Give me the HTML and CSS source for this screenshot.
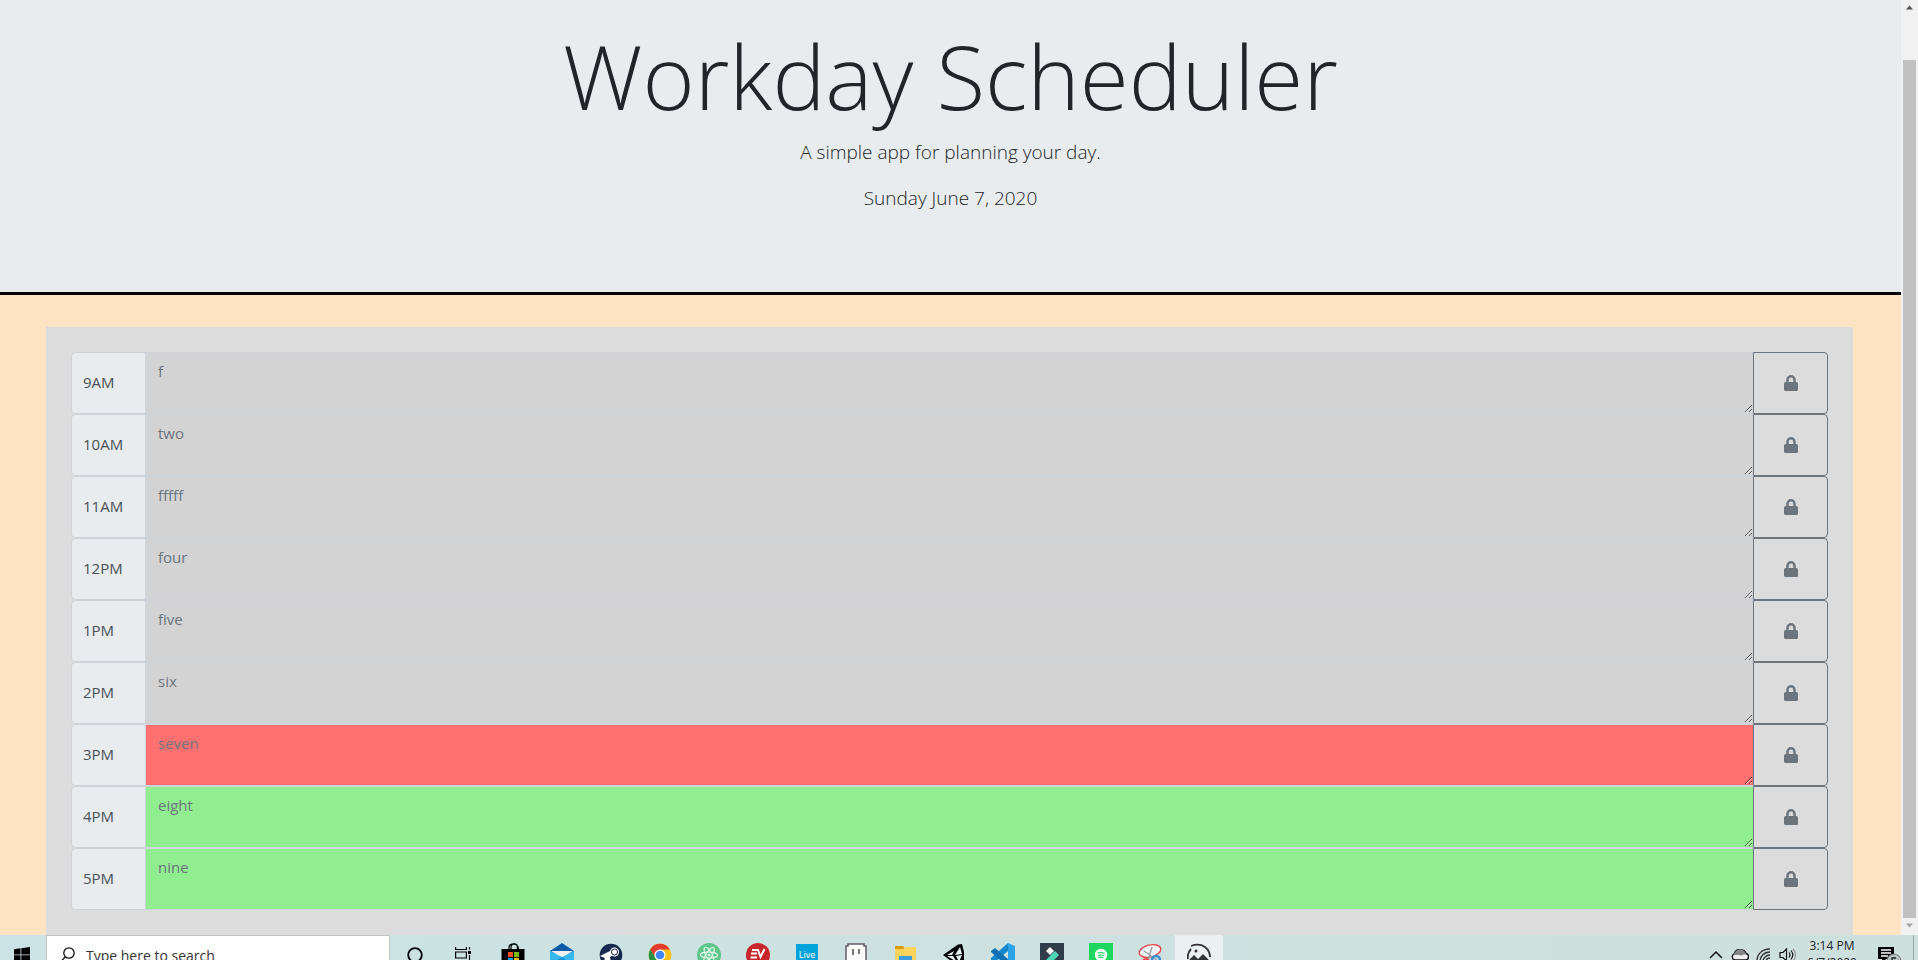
FILE: index.html
```html
<!DOCTYPE html>
<html lang="en">
<head>
<meta charset="utf-8">
<title>Workday Scheduler</title>
<link rel="stylesheet" href="styles.css">
</head>
<body>
<svg class="defs" aria-hidden="true">
  <symbol id="lock" viewBox="0 0 14 16"><path fill-rule="evenodd" d="M12.5 7h-.75V4.75a4.75 4.75 0 0 0-9.500 0V7H1.500A1.500 1.500 0 0 0 0 8.500v6A1.500 1.500 0 0 0 1.500 16h11a1.500 1.500 0 0 0 1.500-1.500v-6A1.500 1.500 0 0 0 12.500 7zM9.250 7h-4.500V4.750a2.250 2.250 0 0 1 4.500 0z"/></symbol>
</svg>
<div class="window">
  <main class="page">
    <header class="jumbotron">
      <h1 class="title">Workday Scheduler</h1>
      <p class="lead">A simple app for planning your day.</p>
      <p class="lead">Sunday June 7, 2020</p>
    </header>
    <section class="planner">
      <div class="slot past"><label class="hour" for="h9">9AM</label><textarea class="entry" id="h9" placeholder="f"></textarea><button class="save" type="button" aria-label="Save 9AM"><svg><use href="#lock"/></svg></button></div>
      <div class="slot past"><label class="hour" for="h10">10AM</label><textarea class="entry" id="h10" placeholder="two"></textarea><button class="save" type="button" aria-label="Save 10AM"><svg><use href="#lock"/></svg></button></div>
      <div class="slot past"><label class="hour" for="h11">11AM</label><textarea class="entry" id="h11" placeholder="fffff"></textarea><button class="save" type="button" aria-label="Save 11AM"><svg><use href="#lock"/></svg></button></div>
      <div class="slot past"><label class="hour" for="h12">12PM</label><textarea class="entry" id="h12" placeholder="four"></textarea><button class="save" type="button" aria-label="Save 12PM"><svg><use href="#lock"/></svg></button></div>
      <div class="slot past"><label class="hour" for="h13">1PM</label><textarea class="entry" id="h13" placeholder="five"></textarea><button class="save" type="button" aria-label="Save 1PM"><svg><use href="#lock"/></svg></button></div>
      <div class="slot past"><label class="hour" for="h14">2PM</label><textarea class="entry" id="h14" placeholder="six"></textarea><button class="save" type="button" aria-label="Save 2PM"><svg><use href="#lock"/></svg></button></div>
      <div class="slot present"><label class="hour" for="h15">3PM</label><textarea class="entry" id="h15" placeholder="seven"></textarea><button class="save" type="button" aria-label="Save 3PM"><svg><use href="#lock"/></svg></button></div>
      <div class="slot future"><label class="hour" for="h16">4PM</label><textarea class="entry" id="h16" placeholder="eight"></textarea><button class="save" type="button" aria-label="Save 4PM"><svg><use href="#lock"/></svg></button></div>
      <div class="slot future"><label class="hour" for="h17">5PM</label><textarea class="entry" id="h17" placeholder="nine"></textarea><button class="save" type="button" aria-label="Save 5PM"><svg><use href="#lock"/></svg></button></div>
    </section>
  </main>
  <div class="scrollbar">
    <svg class="arrow" viewBox="0 0 17 16"><path d="M5 9h7L8.500 5z" fill="#505050"/></svg>
    <div class="track"><div class="thumb"></div></div>
    <svg class="arrow" viewBox="0 0 17 16"><path d="M5 5h7L8.500 9z" fill="#a3a3a3"/></svg>
  </div>
</div>
<footer class="taskbar">
  <div class="bar">
    <button class="start" type="button" aria-label="Start"><svg width="16" height="16" viewBox="0 0 16 16"><path d="M0 2.200 6.500 1.300V7.500H0zM7.300 1.200 16 0v7.500H7.300zM0 8.300h6.500v6.300L0 13.700zM7.300 8.300H16V16l-8.700-1.200z"/></svg></button>
    <div class="search">
      <svg width="16" height="16" viewBox="0 0 16 16" fill="none" stroke="#111" stroke-width="1.300"><circle cx="9" cy="6" r="5.200"/><path d="M5.300 9.700.8 14.700"/></svg>
      <input class="query" type="text" placeholder="Type here to search" aria-label="Type here to search">
    </div>
    <nav class="apps">
      <button class="app" type="button" aria-label="Cortana"><svg viewBox="0 0 24 24"><circle cx="12" cy="12" r="6.800" fill="none" stroke="#000" stroke-width="1.800"/></svg></button>
      <button class="app" type="button" aria-label="Task view"><svg viewBox="0 0 24 24"><g fill="none" stroke="#000" stroke-width="1.200"><path d="M3.600 4v2.500h10.800V4M3.600 20v-2.500h10.800V20M3.600 9h10.800v6H3.600zM17.500 4v2.500M17.500 12v8"/></g><path d="M16 8h3v3h-3z"/></svg></button>
      <button class="app" type="button" aria-label="Store"><svg viewBox="0 0 24 24"><path d="M.5 6h23v18H.5z"/><path d="M8 6V4.500a3.500 3.500 0 0 1 3.500-3.500M10 6V4a3.200 3.200 0 0 1 6.400 0v2M11.500 1c3 0 6 1 6 5" fill="none" stroke="#000" stroke-width="1.200"/><path d="M7 9h5v5H7z" fill="#f25022"/><path d="M13 9h5v5h-5z" fill="#7fba00"/><path d="M7 15h5v5H7z" fill="#00a4ef"/><path d="M13 15h5v5h-5z" fill="#ffb900"/></svg></button>
      <button class="app" type="button" aria-label="Mail"><svg viewBox="0 0 24 24"><path d="M0 8 12 0l12 8v3H0z" fill="#0a5ba7"/><path d="M1 8h22L12 15z" fill="#f2f2f2"/><path d="M0 8l12 6 12-6v14H0z" fill="#35b8f1"/><path d="m0 22 12-8 12 8z" fill="#1490df"/></svg></button>
      <button class="app" type="button" aria-label="Steam"><svg viewBox="0 0 24 24"><circle cx="12" cy="12" r="11.300" fill="#15294f"/><path d="m1 13 7 3 6-4-3-4z" fill="#fff"/><circle cx="15.500" cy="9" r="4.500" fill="#fff"/><circle cx="15.500" cy="9" r="3" fill="none" stroke="#15294f"/><circle cx="8.500" cy="16.500" r="3" fill="#fff"/></svg></button>
      <button class="app" type="button" aria-label="Chrome"><svg viewBox="0 0 24 24"><circle cx="12" cy="12" r="11.300" fill="#fbc116"/><path d="M2.200 6.400A11.300 11.300 0 0 1 21.800 6.500H12L7.300 15z" fill="#e33b2e"/><path d="M2.200 6.400 7.500 15l4.500 8.300A11.300 11.300 0 0 1 2.200 6.400z" fill="#229342"/><circle cx="12" cy="12" r="5.600" fill="#fff"/><circle cx="12" cy="12" r="4.300" fill="#4285f4"/></svg></button>
      <button class="app" type="button" aria-label="Atom"><svg viewBox="0 0 24 24"><circle cx="12" cy="12" r="12" fill="#5fc58a"/><g fill="none" stroke="#e5fff0" stroke-width="1"><ellipse cx="12" cy="12" rx="3" ry="8.500" transform="rotate(-28 12 12)"/><ellipse cx="12" cy="12" rx="3" ry="8.500" transform="rotate(32 12 12)"/><ellipse cx="12" cy="12" rx="3" ry="8.500" transform="rotate(92 12 12)"/></g><circle cx="12" cy="12" r="1.300" fill="#e5fff0"/></svg></button>
      <button class="app" type="button" aria-label="VPN"><svg viewBox="0 0 24 24"><circle cx="12" cy="12" r="12" fill="#c8252c"/><path d="M6 7h6l2.500 7L18.500 6M5 10.500h6M4.500 14.500H11" fill="none" stroke="#fff" stroke-width="2"/></svg></button>
      <button class="app live" type="button">Live</button>
      <button class="app" type="button" aria-label="Aseprite"><svg viewBox="0 0 24 24"><path d="M4 1h16v2h2v19H2V3h2z" fill="#fff" stroke="#65586a" stroke-width="1.500"/><path d="M9 6v6M15 6v5" stroke="#43394a" stroke-width="1.400"/></svg></button>
      <button class="app" type="button" aria-label="Explorer"><svg viewBox="0 0 24 24"><path d="M2 3h8l2 3H2z" fill="#d89b0b"/><path d="M2 6h9l2-2h10v18H2z" fill="#ffd35c"/><path d="M6 13h13v9h-3v-4H9v4H6z" fill="#3d9be0"/></svg></button>
      <button class="app" type="button" aria-label="Unity"><svg viewBox="0 0 24 24"><path d="M1 12 16 1.500 20 1l2 8v12l-6 2z"/><path d="m5 12 7-4-2 4zM5 13h6l4 6zM13 12l5-8 2 7zM14 13l6-1-3 7z" fill="#e8f3f2"/></svg></button>
      <button class="app" type="button" aria-label="Code"><svg viewBox="0 0 24 24"><path d="M17 0v8L4 19l-4-2v-2z" fill="#1687cc"/><path d="M0 8 4 5l13 11v8L0 9z" fill="#0f70b3"/><path d="m17 0 7 3v18l-7 3z" fill="#2ba4ec"/></svg></button>
      <button class="app" type="button" aria-label="Filmora"><svg viewBox="0 0 24 24"><path d="M0 0h24v24H0z" fill="#303d49"/><path d="m10 4 4 4-4 4-4-4z" fill="#fff"/><path d="m15 8 4 4-9 9-4-4z" fill="#4ed8b5"/></svg></button>
      <button class="app" type="button" aria-label="Spotify"><svg viewBox="0 0 24 24"><path d="M0 0h24v24H0z" fill="#1ed760"/><circle cx="12" cy="12" r="6.200" fill="#fff"/><path d="M8.500 10q4-1.200 7.200.5M9 12.300q3-.8 6 .5M9.300 14.300q3-.6 5 .5" fill="none" stroke="#1ed760" stroke-width="1.200"/></svg></button>
      <button class="app" type="button" aria-label="Snip"><svg viewBox="0 0 24 24"><ellipse cx="12" cy="8" rx="11" ry="6" fill="#f3f6f7" stroke="#e6484d" stroke-width="1.400" transform="rotate(-14 12 8)"/><path d="m6 8 13 9M14 4l-4 13" stroke="#9aa5aa" stroke-width="1.500"/><circle cx="18" cy="17" r="4" fill="none" stroke="#3b8fd6" stroke-width="2.500"/><circle cx="8" cy="19" r="3" fill="none" stroke="#e6484d" stroke-width="2"/></svg></button>
      <button class="app active" type="button" aria-label="Photos"><svg viewBox="0 0 24 24"><path d="M4 3Q12 0 18 4q5 4 5 10M1 16Q0 10 4 6" fill="none" stroke="#333" stroke-width="1.800"/><path d="m1 18 6-6 4 4 5-5 7 7v4H1z" fill="#333"/><circle cx="9" cy="8" r="1.500" fill="#333"/></svg></button>
    </nav>
    <div class="tray">
      <svg viewBox="0 0 18 18"><path d="m3 12 6-6 6 6" fill="none" stroke="#111" stroke-width="1.500"/></svg>
      <svg viewBox="0 0 18 18"><path d="M4 14a3.200 3.200 0 0 1-1-6c1-4 4-5 7-4 2-.5 4.500 1 5 3.500A3.300 3.300 0 0 1 14 14z" fill="#eee" stroke="#111" stroke-width="1.300"/><path d="M3 9C4 2 13 2 15 8l-5 1.500L8 9z" fill="#858585"/></svg>
      <svg viewBox="0 0 18 18"><g fill="none" stroke="#333" stroke-width="1.300"><path d="M2 15C2 8 7 3 15 3M5 16c0-6 4-10 10-10M8 16c0-4 3-7 7-7M11 16q0-4 4-4"/></g></svg>
      <svg viewBox="0 0 18 18"><g fill="none" stroke="#111" stroke-width="1.200"><path d="M1 6.500h3l3.500-3.500v12L4 11.500H1zM10 6.500q2 2.500 0 5M12 4.500q3.500 4.500 0 9"/><path d="M14 3q5 6 0 12" stroke="#999"/></g></svg>
    </div>
    <div class="clock"><span>3:14 PM</span><span>6/7/2020</span></div>
    <button class="notes" type="button" aria-label="Notifications"><svg width="26" height="24" viewBox="0 0 26 24"><path d="M1 4h16v12H9l-4 4v-4H1z"/><path d="M4 7h10M4 10h10M4 13h7" stroke="#fff" stroke-width="1.300"/><circle cx="17" cy="18" r="7" fill="#b5c0c0" stroke="#777"/><path d="M15 22v-7h4M15 18.500h3" fill="none" stroke="#222" stroke-width="1.300"/></svg></button>
    <div class="desktop"></div>
  </div>
</footer>
</body>
</html>
```
FILE: styles.css
```css
* { box-sizing: border-box; }
body {
  margin: 0;
  height: 100vh;
  display: flex;
  flex-direction: column;
  overflow: hidden;
  font: 16px/24px "Open Sans", "Noto Sans", sans-serif;
  color: #212529;
}
button, input, textarea { font: inherit; margin: 0; }
.defs { display: none; }
.window { flex: 1; min-height: 0; display: flex; }
.page {
  flex: 1;
  min-width: 0;
  display: flex;
  flex-direction: column;
  overflow: hidden;
  background: #ffe4c4;
}
.jumbotron {
  padding: 18px 32px 63px;
  text-align: center;
  background: #e9ecef;
  border-bottom: 3px solid #000;
}
.title { margin: 0 0 4px; font-size: 89px; line-height: 115px; font-weight: 300; }
.lead { margin: 0 0 16px; font-size: 19px; line-height: 30px; font-weight: 300; }
.planner { flex: 1; margin: 32px 48px 0 46px; padding: 25px; background: #dcdcdc; }
.slot { display: flex; height: 62px; }
.hour {
  width: 75px;
  display: flex;
  align-items: center;
  padding: 0 11px 2px;
  font-size: 15px;
  color: #495057;
  background: #e9ecef;
  border: 1px solid #ced4da;
  border-radius: 4px 0 0 4px;
}
.entry {
  flex: 1;
  min-width: 0;
  margin-left: -1px;
  padding: 6px 12px;
  font-size: 15px;
  border: 1px solid #ced4da;
  border-radius: 0;
  resize: vertical;
  outline: 0;
}
.entry::placeholder { color: #6c757d; opacity: 1; }
.past .entry { background: #d3d3d3; }
.present .entry { background: #ff7070; }
.future .entry { background: #90ee90; }
.save {
  width: 75px;
  margin-left: -1px;
  display: flex;
  align-items: center;
  justify-content: center;
  color: #6c757d;
  background: transparent;
  border: 1px solid #6c757d;
  border-radius: 0 4px 4px 0;
  z-index: 1;
}
.save svg { width: 14px; height: 16px; fill: currentColor; }
.scrollbar { width: 17px; display: flex; flex-direction: column; background: #f1f1f1; }
.arrow { height: 17px; flex: none; }
.track { flex: 1; padding: 43px 2px 0; display: flex; }
.thumb { flex: 1; background: #c1c1c1; }
.taskbar { flex: none; height: 25px; overflow: hidden; background: linear-gradient(90deg, #cbe3e4, #cee0dd); }
.bar { height: 40px; display: flex; }
.bar button { padding: 0; border: 0; background: transparent; color: #000; }
.bar .start { width: 46px; padding-right: 2px; }
.start svg { display: block; margin: 0 auto; }
.search {
  width: 344px;
  display: flex;
  align-items: center;
  gap: 10px;
  padding: 0 13px;
  background: #fff;
  border: 1px solid #c4c4c4;
}
.query { flex: 1; min-width: 0; padding: 2px 0 0; border: 0; outline: 0; font-size: 14px; }
.query::placeholder { color: #333; opacity: 1; }
.apps { display: flex; gap: 1px; padding-left: 1px; }
.bar .app { width: 48px; display: flex; align-items: center; justify-content: center; }
.app svg { width: 24px; height: 24px; }
.bar .active { background: #ebf1f0; }
.bar .live {
  width: 22px;
  height: 22px;
  margin: 9px 13px;
  font-size: 9px;
  color: #fff;
  background: #00a3da;
}
.tray { margin-left: auto; display: flex; align-items: center; gap: 6px; }
.tray svg { width: 18px; height: 18px; }
.clock {
  width: 70px;
  display: flex;
  flex-direction: column;
  align-items: center;
  font-size: 12px;
  line-height: 17px;
  padding-top: 2px;
}
.bar .notes { width: 46px; display: flex; align-items: center; justify-content: center; }
.desktop { width: 5px; border-left: 1px solid #9aa9a8; }
```
